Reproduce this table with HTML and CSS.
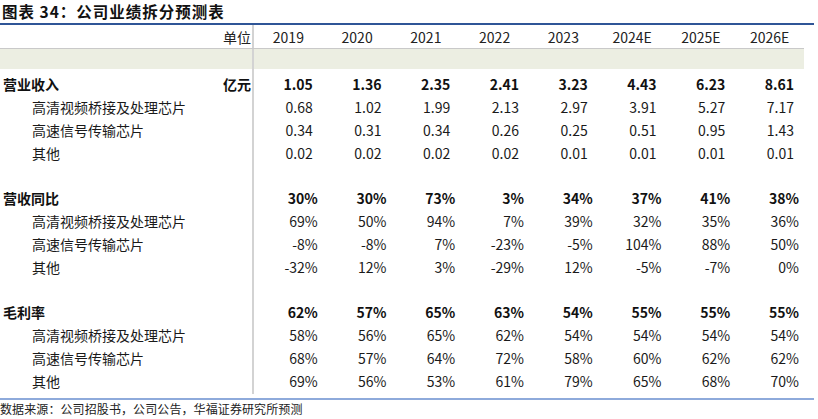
FILE: index.html
```html
<!DOCTYPE html>
<html lang="zh-CN">
<head>
<meta charset="utf-8">
<title>公司业绩拆分预测表</title>
<link rel="stylesheet" href="styles.css">
</head>
<body>
<div class="page">
  <div class="title">图表 34：公司业绩拆分预测表</div>
  <div class="table">
    <div class="row head">
      <div class="lab"><span class="unit">单位</span></div>
      <div>2019</div><div>2020</div><div>2021</div><div>2022</div><div>2023</div><div>2024E</div><div>2025E</div><div>2026E</div>
    </div>
    <div class="row band">
      <div class="lab"></div><div></div><div></div><div></div><div></div><div></div><div></div><div></div><div></div>
    </div>
    <div class="row gap"><div class="lab"></div></div>

    <div class="row grp num">
      <div class="lab"><span>营业收入</span><span class="unit">亿元</span></div>
      <div>1.05</div><div>1.36</div><div>2.35</div><div>2.41</div><div>3.23</div><div>4.43</div><div>6.23</div><div>8.61</div>
    </div>
    <div class="row sub num">
      <div class="lab"><span>高清视频桥接及处理芯片</span></div>
      <div>0.68</div><div>1.02</div><div>1.99</div><div>2.13</div><div>2.97</div><div>3.91</div><div>5.27</div><div>7.17</div>
    </div>
    <div class="row sub num">
      <div class="lab"><span>高速信号传输芯片</span></div>
      <div>0.34</div><div>0.31</div><div>0.34</div><div>0.26</div><div>0.25</div><div>0.51</div><div>0.95</div><div>1.43</div>
    </div>
    <div class="row sub num">
      <div class="lab"><span>其他</span></div>
      <div>0.02</div><div>0.02</div><div>0.02</div><div>0.02</div><div>0.01</div><div>0.01</div><div>0.01</div><div>0.01</div>
    </div>
    <div class="row blank"><div class="lab"></div></div>

    <div class="row grp pct">
      <div class="lab"><span>营收同比</span></div>
      <div>30%</div><div>30%</div><div>73%</div><div>3%</div><div>34%</div><div>37%</div><div>41%</div><div>38%</div>
    </div>
    <div class="row sub pct">
      <div class="lab"><span>高清视频桥接及处理芯片</span></div>
      <div>69%</div><div>50%</div><div>94%</div><div>7%</div><div>39%</div><div>32%</div><div>35%</div><div>36%</div>
    </div>
    <div class="row sub pct">
      <div class="lab"><span>高速信号传输芯片</span></div>
      <div>-8%</div><div>-8%</div><div>7%</div><div>-23%</div><div>-5%</div><div>104%</div><div>88%</div><div>50%</div>
    </div>
    <div class="row sub pct">
      <div class="lab"><span>其他</span></div>
      <div>-32%</div><div>12%</div><div>3%</div><div>-29%</div><div>12%</div><div>-5%</div><div>-7%</div><div>0%</div>
    </div>
    <div class="row blank"><div class="lab"></div></div>

    <div class="row grp pct">
      <div class="lab"><span>毛利率</span></div>
      <div>62%</div><div>57%</div><div>65%</div><div>63%</div><div>54%</div><div>55%</div><div>55%</div><div>55%</div>
    </div>
    <div class="row sub pct">
      <div class="lab"><span>高清视频桥接及处理芯片</span></div>
      <div>58%</div><div>56%</div><div>65%</div><div>62%</div><div>54%</div><div>54%</div><div>54%</div><div>54%</div>
    </div>
    <div class="row sub pct">
      <div class="lab"><span>高速信号传输芯片</span></div>
      <div>68%</div><div>57%</div><div>64%</div><div>72%</div><div>58%</div><div>60%</div><div>62%</div><div>62%</div>
    </div>
    <div class="row sub pct">
      <div class="lab"><span>其他</span></div>
      <div>69%</div><div>56%</div><div>53%</div><div>61%</div><div>79%</div><div>65%</div><div>68%</div><div>70%</div>
    </div>
    <div class="row tail"><div class="lab"></div></div>
  </div>
  <div class="source">数据来源：公司招股书，公司公告，华福证券研究所预测</div>
</div>
</body>
</html>
```

FILE: styles.css
```css
html, body {
  margin: 0;
  padding: 0;
  background: #ffffff;
}

.page {
  width: 814px;
  font-family: "Noto Sans CJK SC", "Noto Sans", sans-serif;
  color: #1a1a1a;
}

.title {
  height: 23px;
  line-height: 23px;
  padding-left: 2px;
  font-size: 15.5px;
  font-weight: 700;
  letter-spacing: 1px;
  color: #111;
  border-bottom: 2px solid #2f5597;
  box-sizing: content-box;
}

.table {
  width: 804px;
  font-size: 14px;
}

.row {
  display: grid;
  grid-template-columns: 254px repeat(8, 1fr);
  height: 22.8px;
  align-items: center;
}

.row > div {
  height: 100%;
  display: flex;
  align-items: center;
  white-space: nowrap;
}

.row > .lab {
  box-sizing: border-box;
  border-right: 2px solid #d3d3d3;
  justify-content: space-between;
  padding-right: 1px;
}

.head {
  height: 23px;
  color: #222;
}

.head > div {
  justify-content: center;
}

.head > .lab {
  justify-content: flex-end;
}

.band {
  height: 21px;
  border-top: 1px solid #c9c9c9;
  box-sizing: border-box;
  background: #eceee2;
}

.gap {
  height: 4px;
}

.blank {
  height: 22.8px;
}

.tail {
  height: 2px;
}

.grp {
  font-weight: 700;
  color: #111;
}

.grp .lab span:first-child {
  padding-left: 3px;
}

.sub .lab span:first-child {
  padding-left: 32px;
}

.num > div:not(.lab) {
  justify-content: flex-end;
  padding-right: 10px;
}

.pct > div:not(.lab) {
  justify-content: flex-end;
  padding-right: 5px;
}

.source {
  margin-top: 4px;
  border-top: 2px solid #8eaadb;
  font-size: 12px;
  line-height: 16px;
  padding-top: 1px;
  letter-spacing: 0.1px;
  color: #222;
}
```
